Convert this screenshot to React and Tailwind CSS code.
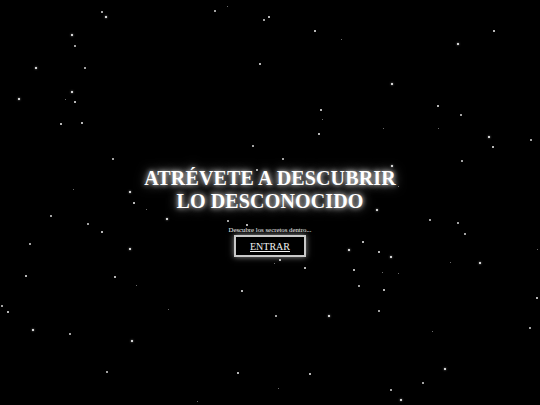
const STARS = [
  [102, 12, 1], [106, 17, 3], [215, 11, 1], [227, 6, 0], [269, 17, 2], [264, 20, 1],
  [72, 35, 3], [75, 46, 1], [36, 68, 3], [85, 68, 1], [260, 64, 2], [72, 92, 3],
  [65, 99, 0], [75, 102, 2], [19, 99, 3], [61, 124, 2], [82, 123, 2], [253, 146, 1],
  [113, 159, 1], [73, 189, 0], [130, 192, 3],
  [315, 31, 2], [341, 39, 0], [494, 31, 2], [458, 44, 3], [392, 84, 3], [321, 110, 2],
  [322, 119, 0], [319, 134, 2], [383, 128, 0], [438, 106, 2], [461, 115, 1], [438, 128, 0],
  [489, 137, 3], [493, 147, 2], [531, 140, 1], [283, 159, 1], [392, 166, 3], [462, 161, 1],
  [398, 186, 0],
  [134, 203, 2], [146, 209, 0], [51, 216, 1], [88, 224, 1], [102, 232, 2], [167, 219, 3],
  [30, 244, 1], [130, 249, 3], [26, 276, 2], [115, 277, 2], [136, 285, 0], [2, 306, 1],
  [8, 312, 2], [33, 330, 3], [70, 334, 1], [168, 309, 0], [132, 341, 3], [242, 291, 2],
  [107, 372, 1], [238, 373, 2], [197, 401, 0], [228, 221, 1], [247, 225, 2],
  [377, 210, 3], [430, 220, 1], [458, 223, 1], [465, 234, 1], [363, 242, 2], [349, 250, 3],
  [379, 252, 2], [391, 257, 3], [480, 263, 3], [450, 262, 0], [537, 249, 0], [280, 260, 2],
  [274, 263, 0], [305, 268, 2], [354, 270, 2], [382, 272, 0], [398, 273, 0], [359, 286, 1],
  [384, 290, 2], [537, 298, 2], [276, 316, 1], [329, 316, 3], [379, 311, 1], [432, 331, 0],
  [530, 328, 1], [445, 369, 3], [310, 374, 2], [423, 383, 1], [278, 388, 0], [391, 390, 1],
  [401, 400, 3], [257, 170, 1],
];

const SIZES = [1, 1.5, 2, 2.6];
const ALPHA = [0.55, 0.85, 0.95, 1];

function Star({ x, y, s }) {
  const d = SIZES[s];
  return (
    <div
      className="absolute rounded-full bg-white"
      style={{
        left: x - d / 2,
        top: y - d / 2,
        width: d,
        height: d,
        opacity: ALPHA[s],
        boxShadow: s === 3 ? '0 0 2px rgba(255,255,255,0.8)' : 'none',
      }}
    />
  );
}

export default function App() {
  return (
    <div className="relative w-[540px] h-[405px] overflow-hidden bg-black font-['Liberation_Serif','Times_New_Roman',serif]">
      <div className="flex flex-col items-center pt-[167px]">
        <h1 className="text-[20px] leading-[23px] tracking-[0.15px] font-bold text-center text-white [text-shadow:0_0_5px_rgba(255,255,255,0.9),0_0_12px_rgba(255,255,255,0.6)]">
          ATRÉVETE A DESCUBRIR
          <br />
          LO DESCONOCIDO
        </h1>
        <p className="mt-[13px] text-[6.8px] leading-[8px] text-[#f0f0f0]">
          Descubre los secretos dentro...
        </p>
        <button
          type="button"
          className="mt-[1px] border-2 border-[#c8c8c8] px-[14px] pt-[4px] pb-[3px] text-[10px] leading-[11px] text-[#f2f2f2] underline shadow-[0_0_6px_rgba(255,255,255,0.55)]"
        >
          ENTRAR
        </button>
      </div>
      {STARS.map(([x, y, s], i) => (
        <Star key={i} x={x} y={y} s={s} />
      ))}
    </div>
  );
}
